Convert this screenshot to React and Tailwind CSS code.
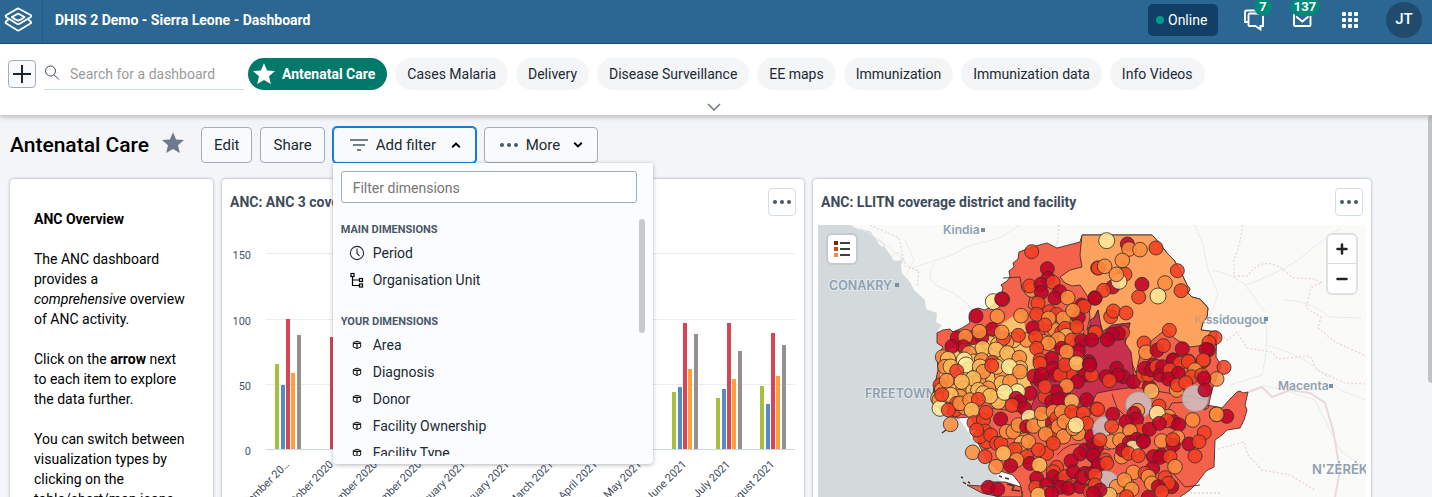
import React from "react";

const dashboards = [
  "Cases Malaria",
  "Delivery",
  "Disease Surveillance",
  "EE maps",
  "Immunization",
  "Immunization data",
  "Info Videos",
];

const yourDimensions = ["Area", "Diagnosis", "Donor", "Facility Ownership", "Facility Type"];

const STAR =
  "M12 1.2l3.1 7.2 7.9.7-6 5.2 1.8 7.7L12 17.9 5.200 22 7 14.300 1 9.100l7.900-.7z";

function Star({ className }) {
  return (
    <svg viewBox="0 0 24 24" className={className} fill="currentColor" aria-hidden="true">
      <path d={STAR} />
    </svg>
  );
}

function Dots() {
  return (
    <svg viewBox="0 0 20 6" className="h-[6px] w-5" fill="currentColor" aria-hidden="true">
      <circle cx="3" cy="3" r="2" />
      <circle cx="10" cy="3" r="2" />
      <circle cx="17" cy="3" r="2" />
    </svg>
  );
}

function Header() {
  return (
    <header className="flex h-11 shrink-0 items-center border-b border-[#1a5280] bg-[#2c6693] pb-1 text-white">
      <a href="#home" aria-label="Home" className="-mb-1 flex h-[43px] w-[43px] shrink-0 items-center border-r border-[#235a86] pb-1 pl-1">
        <svg viewBox="0 0 28 26" className="h-[26px] w-7" fill="none" stroke="#fff" strokeWidth="1.8" strokeLinejoin="round" strokeLinecap="round">
          <path d="M14.500 1.500L27 8.300Q27.600 9.200 26.800 9.900L15.200 17Q14.200 17.500 13.300 17L2 9.900Q1.200 9 2 8.300L13.500 1.600Q14 1.300 14.500 1.500Z" />
          <path d="M14.200 6.600L20.500 10Q17.500 12.800 14.200 13.600Q10.500 12.500 7.800 10Z" />
          <path d="M4 12.800L1.800 14.700Q1.200 15.500 2 16.200L13.300 23.300Q14.200 23.900 15.200 23.300L26.800 16.200Q27.500 15.400 26.800 14.700L24.600 12.800" />
        </svg>
      </a>
      <h1 className="min-w-0 flex-1 truncate pl-3 text-sm font-bold">DHIS 2 Demo - Sierra Leone - Dashboard</h1>
      <div className="flex h-8 shrink-0 items-center gap-1 rounded-[5px] bg-[#104067] px-2 text-sm">
        <span className="size-2 rounded-full bg-[#00998a]" />
        <span className="w-[42px]">Online</span>
      </div>
      <a href="#messages" aria-label="Messages" className="relative ml-[25px] size-6">
        <svg viewBox="0 0 24 24" className="size-6" fill="none" stroke="#fff" strokeWidth="1.900">
          <path d="M5 14H2V4Q2 2.500 3.500 2.500H14" />
          <path d="M7 5.500H20V18H17.500V21.500L12.500 18H6.500Q5.500 18 5.500 17V7Q5.500 5.500 7 5.500Z" />
        </svg>
        <span className="absolute -top-2.5 left-[11px] flex h-[18px] w-[18px] items-center justify-center rounded-full bg-[#00897b] text-[13px] font-bold">7</span>
      </a>
      <a href="#mail" aria-label="Mail" className="relative ml-6 size-6">
        <svg viewBox="0 0 24 24" className="size-6" fill="none" stroke="#fff" strokeWidth="1.900">
          <rect x="3" y="4" width="16.500" height="14" rx="1" />
          <path d="M5 8.500L11.300 13.500L17.500 8.500" />
        </svg>
        <span className="absolute -top-2.5 -left-px flex h-[18px] w-[30px] items-center justify-center rounded-full bg-[#00897b] text-[13px] font-bold">137</span>
      </a>
      <button aria-label="Apps" className="ml-[27px] grid grid-cols-3 gap-[2px]">
        {[0, 1, 2, 3, 4, 5, 6, 7, 8].map((i) => (
          <span key={i} className="size-1 rounded-[1px] bg-white" />
        ))}
      </button>
      <button className="mr-2.5 ml-7 size-9 rounded-full bg-[#214b6c] text-[15px] font-medium">JT</button>
    </header>
  );
}

function DashboardsBar() {
  return (
    <nav className="relative z-20 shrink-0 bg-white pt-3.5 pr-1 shadow-[0_2px_5px_rgba(0,0,0,0.26)]">
      <div className="flex items-center pl-2">
        <button aria-label="New dashboard" className="flex size-7 items-center justify-center rounded border border-[#a0adba] bg-[#f9fafb]">
          <svg viewBox="0 0 20 20" className="size-5" stroke="#1b2530" strokeWidth="2" aria-hidden="true">
            <path d="M10 1V19M1 10H19" />
          </svg>
        </button>
        <label className="ml-2 flex h-8 w-[200px] items-center border-b border-[#d0dbe5] text-[#404b5a]">
          <svg viewBox="0 0 16 16" className="mb-0.5 size-4 shrink-0" fill="none" stroke="currentColor" aria-hidden="true">
            <circle cx="6.500" cy="6" r="5" />
            <path d="M10 9.700L14.800 14.500" />
          </svg>
          <input type="text" aria-label="Search for a dashboard" placeholder="Search for a dashboard" className="ml-2.5 w-full min-w-0 bg-transparent text-sm outline-none placeholder:text-[#9b9b9b]" />
        </label>
        <div className="ml-1 flex gap-2 text-sm whitespace-nowrap text-[#212934]">
          <a href="#antenatal-care" className="flex h-8 items-center gap-1.5 rounded-full bg-[#00796b] pr-3 pl-1 font-bold text-white">
            <Star className="size-6" />
            Antenatal Care
          </a>
          {dashboards.map((name) => (
            <a key={name} href="#dashboard" className="flex h-8 items-center rounded-full bg-[#f3f5f7] px-3">
              {name}
            </a>
          ))}
        </div>
      </div>
      <button aria-label="Show more dashboards" className="mx-auto flex h-[25px] w-8 items-center justify-center pt-2">
        <svg viewBox="0 0 14 8" className="h-2 w-3.5" fill="none" stroke="#6e7a8a" strokeWidth="1.500" aria-hidden="true">
          <path d="M1 1L7 7L13 1" />
        </svg>
      </button>
    </nav>
  );
}

function CubeIcon() {
  return (
    <svg viewBox="0 0 10 10" className="size-2.5" fill="none" stroke="#111" strokeWidth="1" aria-hidden="true">
      <path d="M5 1.200L8.700 2.500V7L5 8.500L1.300 7V2.500Z" />
      <path d="M1.500 3.400H8.500M5 3.400V8.500" strokeWidth="1.200" />
    </svg>
  );
}

function Dimension({ icon, children }) {
  return (
    <li>
      <button className="flex h-[27px] w-full items-center gap-2 pl-2 text-left text-sm text-[#212934]">
        <span className="flex w-4 justify-center">{icon}</span>
        {children}
      </button>
    </li>
  );
}

function FilterMenu() {
  return (
    <div className="absolute top-full left-0 z-10 h-[301px] w-80 rounded-b bg-[#fbfcfd] px-2 pt-2 pb-2 shadow-[0_1px_4px_rgba(33,41,52,0.35)]">
      <input type="text" aria-label="Filter dimensions" placeholder="Filter dimensions" className="h-8 w-[296px] rounded-[3px] border border-[#a0adba] bg-white px-[11px] pt-0.5 text-sm outline-none placeholder:text-[#757575]" />
      <div className="mt-4 flex h-[237px] overflow-hidden">
        <div className="flex-1">
          <h3 className="pt-0.5 text-[11px] leading-[18px] font-bold text-[#4a5768]">MAIN DIMENSIONS</h3>
          <ul>
            <Dimension
              icon={
                <svg viewBox="0 0 16 16" className="size-4" fill="none" stroke="#212934" strokeWidth="1.100" aria-hidden="true">
                  <circle cx="8" cy="8" r="6.600" />
                  <path d="M8 3.500V8.500L10.500 11" />
                </svg>
              }
            >
              Period
            </Dimension>
            <Dimension
              icon={
                <svg viewBox="0 0 16 16" className="size-4" fill="none" stroke="#000" strokeWidth="1.200" aria-hidden="true">
                  <rect x="2" y="1.500" width="3" height="3" />
                  <rect x="10.500" y="6.500" width="3" height="3" />
                  <rect x="10.500" y="12" width="3" height="3" />
                  <path d="M3.500 4.500V13.500H10.500M3.500 8H10.500" />
                </svg>
              }
            >
              Organisation Unit
            </Dimension>
          </ul>
          <h3 className="pt-5 text-[11px] leading-[18px] font-bold text-[#4a5768]">YOUR DIMENSIONS</h3>
          <ul>
            {yourDimensions.map((name) => (
              <Dimension key={name} icon={<CubeIcon />}>
                {name}
              </Dimension>
            ))}
          </ul>
        </div>
        <span className="h-[114px] w-1.5 rounded-full bg-[#c8c9cb]" />
      </div>
    </div>
  );
}

function TitleBar() {
  return (
    <div className="flex items-center px-2.5 text-[15px] text-[#212934]">
      <h2 className="text-[21px] leading-7 font-medium text-black">Antenatal Care</h2>
      <button aria-label="Star dashboard" className="mx-3 pb-1 text-[#6e7a8a]">
        <Star className="size-6" />
      </button>
      <button className="ml-1 h-9 rounded border border-[#a0adba] bg-[#f9fafb] px-3">Edit</button>
      <button className="ml-2 h-9 rounded border border-[#a0adba] bg-[#f9fafb] px-3">Share</button>
      <div className="relative ml-2">
        <button className="flex h-9 w-[143px] items-center rounded border border-[#147cd7] bg-[#f9fafb] pl-4 ring-1 ring-[#147cd7]">
          <svg viewBox="0 0 18 12" className="h-3 w-[18px]" fill="none" stroke="#4a5768" strokeWidth="1.700" aria-hidden="true">
            <path d="M0 1H18M3 6H15M7 11H11" />
          </svg>
          <span className="ml-2">Add filter</span>
          <svg viewBox="0 0 10 6" className="ml-[15px] h-1.5 w-2.5" fill="none" stroke="#000" strokeWidth="2" aria-hidden="true">
            <path d="M1.200 5.200L5 1.600L8.800 5.200" />
          </svg>
        </button>
        <FilterMenu />
      </div>
      <button className="ml-2 flex h-9 w-[114px] items-center rounded border border-[#a0adba] bg-[#f9fafb] pl-3.5">
        <span className="text-[#4a5768]">
          <Dots />
        </span>
        <span className="ml-[7px]">More</span>
        <svg viewBox="0 0 10 6" className="ml-[13px] h-1.5 w-2.5" fill="none" stroke="#000" strokeWidth="2" aria-hidden="true">
          <path d="M1.200 .8L5 4.400L8.800 .8" />
        </svg>
      </button>
    </div>
  );
}

function CardHeader({ title }) {
  return (
    <div className="flex h-[46px] shrink-0 items-center pr-2 pl-2">
      <h3 className="min-w-0 flex-1 truncate text-sm font-bold text-[#404b5a]">{title}</h3>
      <button aria-label="Item options" className="flex size-7 items-center justify-center rounded border border-[#d5dde5] bg-white text-[#4a5768]">
        <Dots />
      </button>
    </div>
  );
}

const barColors = ["#a8bf3c", "#518cc3", "#d74554", "#ff9e3b", "#968f8f"];
const chartGroups = [
  { month: "September 20…", x: 275, tops: [364, 385, 319, 373, 335] },
  { month: "October 2020", x: 319, tops: [449, 449, 337, 380, 340] },
  { month: "November 2020", x: 363, tops: [380, 390, 345, 384, 350] },
  { month: "December 2020", x: 407, tops: [386, 396, 350, 388, 356] },
  { month: "January 2021", x: 451, tops: [384, 392, 340, 380, 350] },
  { month: "February 2021", x: 495, tops: [386, 394, 348, 384, 354] },
  { month: "March 2021", x: 539, tops: [380, 390, 340, 380, 346] },
  { month: "April 2021", x: 583, tops: [388, 392, 345, 382, 350] },
  { month: "May 2021", x: 627, tops: [378, 384, 330, 370, 340] },
  { month: "June 2021", x: 672, tops: [392, 387, 323, 369, 334] },
  { month: "July 2021", x: 716, tops: [398, 389, 323, 379, 351] },
  { month: "August 2021", x: 760, tops: [386, 404, 333, 376, 345] },
];
const barOffsets = [0, 6, 11, 16, 22];

function Chart() {
  return (
    <svg viewBox="222 225 582 290" className="h-[290px] w-full" role="img" aria-label="ANC coverage by month" fontFamily="Roboto, sans-serif" fontSize="11">
      {[
        [150, 254],
        [100, 320],
        [50, 385],
        [0, 450],
      ].map(([value, y]) => (
        <g key={value}>
          <path d={`M266 ${y - 0.5}H795`} stroke={value ? "#ececec" : "#ccd6eb"} />
          <text x="251" y={y + 5} textAnchor="end" fill="#4a5768">
            {value}
          </text>
        </g>
      ))}
      {chartGroups.map(({ month, x, tops }) => (
        <g key={month}>
          {tops.map((top, i) => (
            <rect key={i} x={x + barOffsets[i]} y={top} width="4" height={449 - top} fill={barColors[i]} />
          ))}
          <text transform={`translate(${x + 15} 465) rotate(-45)`} textAnchor="end" fill="#404b5a">
            {month}
          </text>
        </g>
      ))}
    </svg>
  );
}

const facilityColors = { d: "#bd0026", r: "#f23c1f", o: "#fd8d3c", y: "#fdb95a", l: "#ffeb9b", g: "#cdbfc2" };

// Facilities by map tile; each entry is colour, x, y in tile units.
const tiles = [
  {
    x: 336,
    y: 0,
    points:
      "o 290,345 y 250,345 o 230,350 y 175,352 y 205,358 o 340,350 r 375,350 o 415,300 o 440,320 o 375,315 r 395,322 o 420,275 d 455,240 l 190,230 r 218,223 d 215,222 d 138,273 o 202,274 r 305,80 d 352,131 d 354,160 o 305,195 r 299,183 d 333,178 d 334,202 r 369,172 d 389,200 d 375,219 o 413,218 r 324,234 r 358,260 r 320,268 o 273,272 r 380,268 o 400,280 o 356,280 d 445,277 r 462,244 o 429,257 r 220,340 d 187,313 o 215,322 d 155,338 d 128,338 o 148,320 d 82,338 o 106,335 d 100,365 d 66,364 r 265,331 d 309,309 r 345,300 r 317,336 r 405,310 r 440,305 y 408,333 o 385,342 r 425,345 d 455,347 o 355,355 r 320,370 y 158,370 y 215,405 o 255,410 y 198,374 o 117,384 y 232,385 o 268,398 o 38,396 y 54,402 y 130,410 l 103,405 o 155,405 r 187,412 r 330,405 d 365,400 d 395,370 y 440,400 d 445,378 o 410,380 r 494,322 d 476,410 d 495,218 r 503,129",
  },
  {
    x: 336,
    y: 405,
    points:
      "y 70,80 o 100,85 y 130,90 o 150,60 y 190,60 o 215,45 y 215,70 o 240,65 y 75,50 o 175,85 o 90,110 y 115,30 r 30,75 o 35,90 y 200,20 o 45,20 l 108,15 y 62,20 r 80,33 y 150,20 o 160,35 r 185,17 y 130,55 y 95,65 o 50,62 y 270,25 l 238,20 o 270,35 r 330,10 d 375,45 d 330,60 d 400,35 r 420,40 d 312,48 d 335,43 d 370,25 r 390,45 r 405,15 y 440,10 d 478,12 r 480,45 d 465,45 d 442,65 d 400,100 o 410,78 d 378,95 r 345,110 d 365,125 d 300,100 r 345,80 d 385,120 y 425,124 d 470,119 y 25,115 o 28,120 l 30,145 y 62,105 r 35,104 r 75,150 r 80,130 r 55,150 o 62,193 y 145,90 o 105,143 o 90,130 o 120,120 y 195,115 y 205,125 y 160,100 y 180,108 r 145,118 l 262,95 l 224,97 d 258,115 d 270,125 r 246,136 d 283,144 y 125,150 r 132,188 r 160,180 r 168,157 d 212,177 r 165,213 r 170,245 r 150,230 r 182,225 r 200,250 r 213,250 o 230,215 o 265,210 o 250,215 o 265,195 l 298,172 d 290,200 o 325,190 o 310,198 y 345,185 o 335,160 d 367,190 r 365,215 o 285,240 y 275,250 r 365,235 o 347,222 o 270,270 r 255,268 y 220,280 o 295,245 r 350,280 r 325,270 r 290,290 r 140,210 o 128,277 r 165,290 o 198,320 o 260,300 d 242,317 d 300,310 y 328,315 r 380,322 o 370,155 r 380,175 o 385,200 o 395,155 o 403,185 o 400,230 r 370,250 r 455,180 r 425,155 r 460,160 r 470,190 o 445,220 o 430,205 l 438,195 d 485,230 r 500,147 d 465,270 d 450,282 d 423,303 d 490,255 d 490,287 d 505,310 r 370,335 d 320,355 r 317,382 d 370,350 d 350,375 d 390,360 r 405,350 d 430,335 r 420,380 d 392,382 d 415,385 d 450,380 d 465,340 o 465,350 d 455,352 r 350,400 d 175,382 d 203,388 y 325,405 d 365,400 d 485,340 r 495,375 r 480,395",
  },
  {
    x: 816,
    y: 0,
    points:
      "l 50,47 d 112,57 o 117,72 o 150,74 r 198,69 o 97,106 r 25,129 o 44,124 r 105,148 d 68,186 l 87,169 o 79,148 r 41,196 d 15,220 d 156,178 r 146,216 o 225,174 l 204,213 r 262,137 r 273,197 r 62,275 r 70,258 r 108,264 r 16,322 r 98,322 d 85,325 d 67,328 d 52,344 d 5,345 r 238,316 r 162,354 o 168,382 d 201,376 r 220,362 d 277,371 r 375,338 r 357,352 d 355,375 d 348,373 d 250,405 r 295,408 r 340,408",
  },
  {
    x: 816,
    y: 405,
    points:
      "d 80,25 d 48,50 d 100,50 d 85,45 r 58,62 d 130,65 r 5,45 d 0,15 d 178,80 d 190,15 r 160,45 r 175,45 d 165,25 d 185,30 r 200,20 d 210,45 d 218,20 d 250,0 r 270,10 r 295,5 r 340,0 o 315,30 r 245,45 r 240,30 d 265,40 d 235,57 r 305,50 o 260,90 r 262,75 r 287,68 r 402,22 r 335,45 o 380,57 d 342,55 y 184,93 g 146,135 g 316,115 g 48,208 d 345,90 r 207,138 o 142,152 d 132,160 o 235,170 l 202,160 d 250,185 d 140,177 r 231,182 d 266,194 o 308,180 o 380,163 d 410,169 o 380,163 r 23,148 d 68,163 d 108,185 o 80,215 r 65,199 r 150,210 d 178,208 o 120,213 d 208,190 o 65,245 o 90,240 d 118,247 d 140,238 d 160,243 o 215,243 o 262,232 d 250,255 r 248,239 d 297,252 r 343,218 r 327,245 r 315,288 l 128,265 o 95,290 d 98,270 r 115,280 r 145,287 d 160,245 d 190,290 d 215,285 d 210,292 r 240,290 o 255,320 d 188,325 d 20,262 r 30,240 d 10,285 r 45,300 d 25,315 r 50,310 o 130,337 r 165,340 o 175,350 o 185,370 r 225,353 d 245,380 r 235,370 d 205,380 r 215,395 g 48,372 y 110,375 o 80,380 o 103,360 o 125,388 r 110,410 y 58,405 r 15,345 r 15,375 d 30,390 d 10,400 d 175,412",
  },
];

const facilityRadius = { d: 21, r: 21, o: 22, y: 23, l: 24, g: 40 };

function Facilities() {
  return tiles.map((tile, t) => (
    <g key={t} transform={`translate(${tile.x} ${tile.y})`} stroke="#3a2e2b" strokeWidth="2.500" fillOpacity="0.86">
      {tile.points
        .replace(/([a-z]) /g, "$1")
        .split(" ")
        .map((entry, i) => {
          const kind = entry[0];
          const [x, y] = entry.slice(1).split(",");
          return (
            <circle
              key={i}
              cx={x}
              cy={y}
              r={facilityRadius[kind]}
              fill={facilityColors[kind]}
              stroke={kind === "g" ? "#9b8c8c" : undefined}
            />
          );
        })}
    </g>
  ));
}

function MapView() {
  return (
    <div className="relative mx-[5px] h-[290px] overflow-hidden bg-[#fafaf9]">
      <svg viewBox="0 0 1644 870" preserveAspectRatio="xMidYMin slice" className="h-full w-full" role="img" aria-label="Map of LLITN coverage">
        <g transform="scale(3) translate(-818 -225)">
          <path fill="#d4dadc" d="M810 225H850L858 229L870 231L876 239L882 242L888 252L893 258L903 258L901 266L902 273L910 282L914 290L925 300L926 309L937 313L936 322L942 325L938 330L950 350L960 420L980 450L1000 480L1040 520H810Z" />
          <path fill="#fafaf9" stroke="#e3e6e7" strokeWidth="0.800" d="M892 256Q896 250 902 255Q903 261 896 261Q891 260 892 256ZM878 240l6 5l-2 2l-5-5Z" />
          <g fill="none" stroke="#e9ebeb">
            <path d="M860 228L880 240L898 255L912 268L930 262L950 256L968 246L1000 238L1020 225M935 262Q925 275 935 285Q965 295 975 315M905 240L914 260L906 275M1195 225L1203 245L1208 270L1218 293L1209 320M1212 270Q1235 275 1245 285L1265 312M1283 300Q1310 300 1330 317L1362 318M1245 285Q1290 270 1310 250L1340 228M1265 318Q1270 340 1262 375L1230 385M1265 345Q1310 355 1340 390L1366 400M1262 385L1290 392L1315 400L1340 450L1366 470" />
          </g>
          <g fill="none" stroke="#eed3d7" strokeWidth="1.300" strokeDasharray="2 2">
            <path d="M870 225L899 238L905 266L919 271L917 287M1059 225L1057 245M1243 225Q1240 245 1234 260L1234 276L1248 276Q1260 257 1280 267L1293 278L1315 279L1322 283Q1310 285 1310 292L1306 308L1321 317L1318 328L1335 342L1366 356M1217 332L1228 340L1237 332L1247 348L1272 352L1278 359L1310 356L1317 370L1345 383L1366 384M1218 449L1244 442L1248 455L1262 470L1290 475L1315 490M1190 493L1220 493" />
          </g>
          <path fill="none" stroke="#ead8dc" strokeWidth="2" d="M1248 392L1262 387L1272 397L1290 390L1310 393L1325 403L1333 430L1340 470L1335 497" />
          <g stroke="#4a2d2a" strokeWidth="0.900" strokeLinejoin="round">
            <text x="865" y="398" fill="#8fa0b0" stroke="#e3e8ea" strokeWidth="2" paintOrder="stroke" fontFamily="Inter, sans-serif" fontWeight="600" fontSize="12.500">
              FREETOWN
            </text>
            <path fill="#f4624c" d="M937 333L943 330L950 329L953 332L962 328L970 323L969 318L972 310L978 308L985 310L992 306L1000 298L1003 288L1001 285L1007 281L1010 277L1009 271L1014 267L1013 263L1018 259L1019 252L1032 247L1047 243L1057 248L1080 242L1082 235H1152L1155 238L1167 253L1174 260L1180 270L1187 285L1190 289L1188 293L1192 297L1200 299L1204 303L1208 308L1207 317L1203 322L1201 330L1217 332L1216 357L1221 365L1212 390L1208 408L1204 410L1207 405L1222 408L1230 399L1237 392L1240 391L1243 393L1248 392L1245 405L1247 410L1244 420L1240 428L1227 430L1222 435L1215 440L1214 467L1206 471L1197 483L1190 490L1180 497L1170 520H1010L1023 495L1020 484L1013 475L997 470L987 460L978 443L977 430L970 417L957 418L940 410L933 393L938 370L937 357L943 347L937 343Z" />
            <path fill="#fdc06c" stroke="none" d="M1021 312L1026 330L1036 362L1032 385L1010 398L975 404L945 398L940 375L948 350L972 341L1000 325L1010 318Z" />
            <path fill="#fda35f" d="M1082 235H1152L1155 238L1167 253L1174 260L1180 270L1187 285L1190 289L1188 293L1192 297L1200 299L1208 308L1207 317L1203 322L1201 330L1217 332L1213 344L1190 347L1177 340L1165 330L1150 342L1140 355L1136 373L1133 366L1125 343L1128 330L1130 323L1115 325L1103 332L1100 322L1098 310L1094 318L1087 330L1090 317L1088 297L1080 285L1072 286L1065 283L1060 277L1070 270L1082 267L1080 255Z" />
            <path fill="#c9304f" d="M1090 320L1095 317L1098 310L1102 332L1112 325L1130 323L1125 343L1131 352L1135 387L1113 390L1097 393L1092 402L1080 407L1060 415L1030 410L1037 392L1030 383L1050 370L1066 360L1077 343L1090 335Z" />
            <path fill="none" d="M1003 278L1020 277L1022 290L1030 297L1028 307L1042 315M1042 315L1045 340M1135 387L1150 390L1180 395L1208 400M1112 394L1117 408L1125 416L1132 440M1165 415L1172 403L1190 402M1174 418L1178 440L1170 470L1185 487L1200 485M1057 455Q1070 440 1085 445L1110 450M990 408L1030 413L1050 430M1140 450L1160 470" />
            <path fill="#f4624c" d="M967 485L981 486L990 482L1005 482L1021 487L1022 497H1000L982 493Z" />
            <path fill="none" strokeWidth="1.500" d="M961 477l2 1M963 482l3 2M968 482l2 1M942 433l4-3M999 476l3 1M1005 478l4 1M1007 484l7 2l-2 4l8 1" />
          </g>
          <g fill="#8fa0b0" fontFamily="Inter, sans-serif" fontWeight="600" fontSize="12">
            <text x="943" y="234">Kindia</text>
            <text x="829" y="290" stroke="#e3e8ea" strokeWidth="2" paintOrder="stroke" fontSize="12.500">CONAKRY</text>
            <text x="1194" y="324">
              <tspan fill="#e39a69">Ki</tspan>ssidougou
            </text>
            <text x="1278" y="390">Macenta</text>
            <text x="1312" y="474" fontSize="13">N'ZÉRÉKORÉ</text>
          </g>
          <path fill="#7c8fa1" d="M981 228h4v4h-4ZM895 283h4v4h-4ZM1264 317h4v4h-4ZM1329 384h4v4h-4Z" />
        </g>
        <Facilities />
      </svg>
      <button aria-label="Legend" className="absolute top-2 left-2 flex size-8 items-center justify-center rounded-md border-2 border-[#c4cacc] bg-white">
        <svg viewBox="0 0 16 16" className="size-4" aria-hidden="true">
          <path fill="#7f2704" d="M0 0h4v4H0Z" />
          <path fill="#d94801" d="M0 6h4v4H0Z" />
          <path fill="#fd8d3c" d="M0 12h4v4H0Z" />
          <path stroke="#000" strokeWidth="1.600" d="M6 2H16M6 8H16M6 14H16" />
        </svg>
      </button>
      <div className="absolute top-2 right-2 flex flex-col divide-y divide-[#ddd] rounded-md border-2 border-[#e0e1e1] bg-white">
        <button aria-label="Zoom in" className="flex h-[29px] w-7 items-center justify-center">
          <svg viewBox="0 0 12 12" className="size-3" stroke="#222" strokeWidth="2.500" strokeLinecap="round" aria-hidden="true">
            <path d="M6 1.500V10.500M1.500 6H10.500" />
          </svg>
        </button>
        <button aria-label="Zoom out" className="flex h-[29px] w-7 items-center justify-center">
          <svg viewBox="0 0 12 12" className="size-3" stroke="#222" strokeWidth="2.500" strokeLinecap="round" aria-hidden="true">
            <path d="M1.500 6H10.500" />
          </svg>
        </button>
      </div>
    </div>
  );
}

function Card({ children, className = "" }) {
  return (
    <section className={`min-w-0 rounded bg-white shadow-[0_0_3px_rgba(33,41,52,0.4)] ${className}`}>{children}</section>
  );
}

export default function App() {
  return (
    <div className="flex h-screen flex-col overflow-hidden bg-[#f3f5f8] font-['Roboto',sans-serif]">
      <Header />
      <DashboardsBar />
      <main className="relative min-h-0 flex-1 overflow-hidden pt-3">
        <TitleBar />
        <div className="mt-4 grid grid-cols-[203fr_582fr_558fr] gap-[9px] pr-[61px] pl-2.5">
          <Card className="px-6 pt-[30px] text-sm leading-5 text-black">
            <p className="mb-5 font-bold">ANC Overview</p>
            <p className="mb-5">
              The ANC dashboard provides a <em>comprehensive</em> overview of ANC activity.
            </p>
            <p className="mb-5">
              Click on the <strong>arrow</strong> next to each item to explore the data further.
            </p>
            <p>You can switch between visualization types by clicking on the table/chart/map icons.</p>
          </Card>
          <Card>
            <CardHeader title="ANC: ANC 3 coverage last 12 months" />
            <Chart />
          </Card>
          <Card>
            <CardHeader title="ANC: LLITN coverage district and facility" />
            <MapView />
          </Card>
        </div>
        <span className="absolute top-0 right-0 h-[268px] w-1 rounded-l-full bg-[#c1c2c4]" />
      </main>
    </div>
  );
}
